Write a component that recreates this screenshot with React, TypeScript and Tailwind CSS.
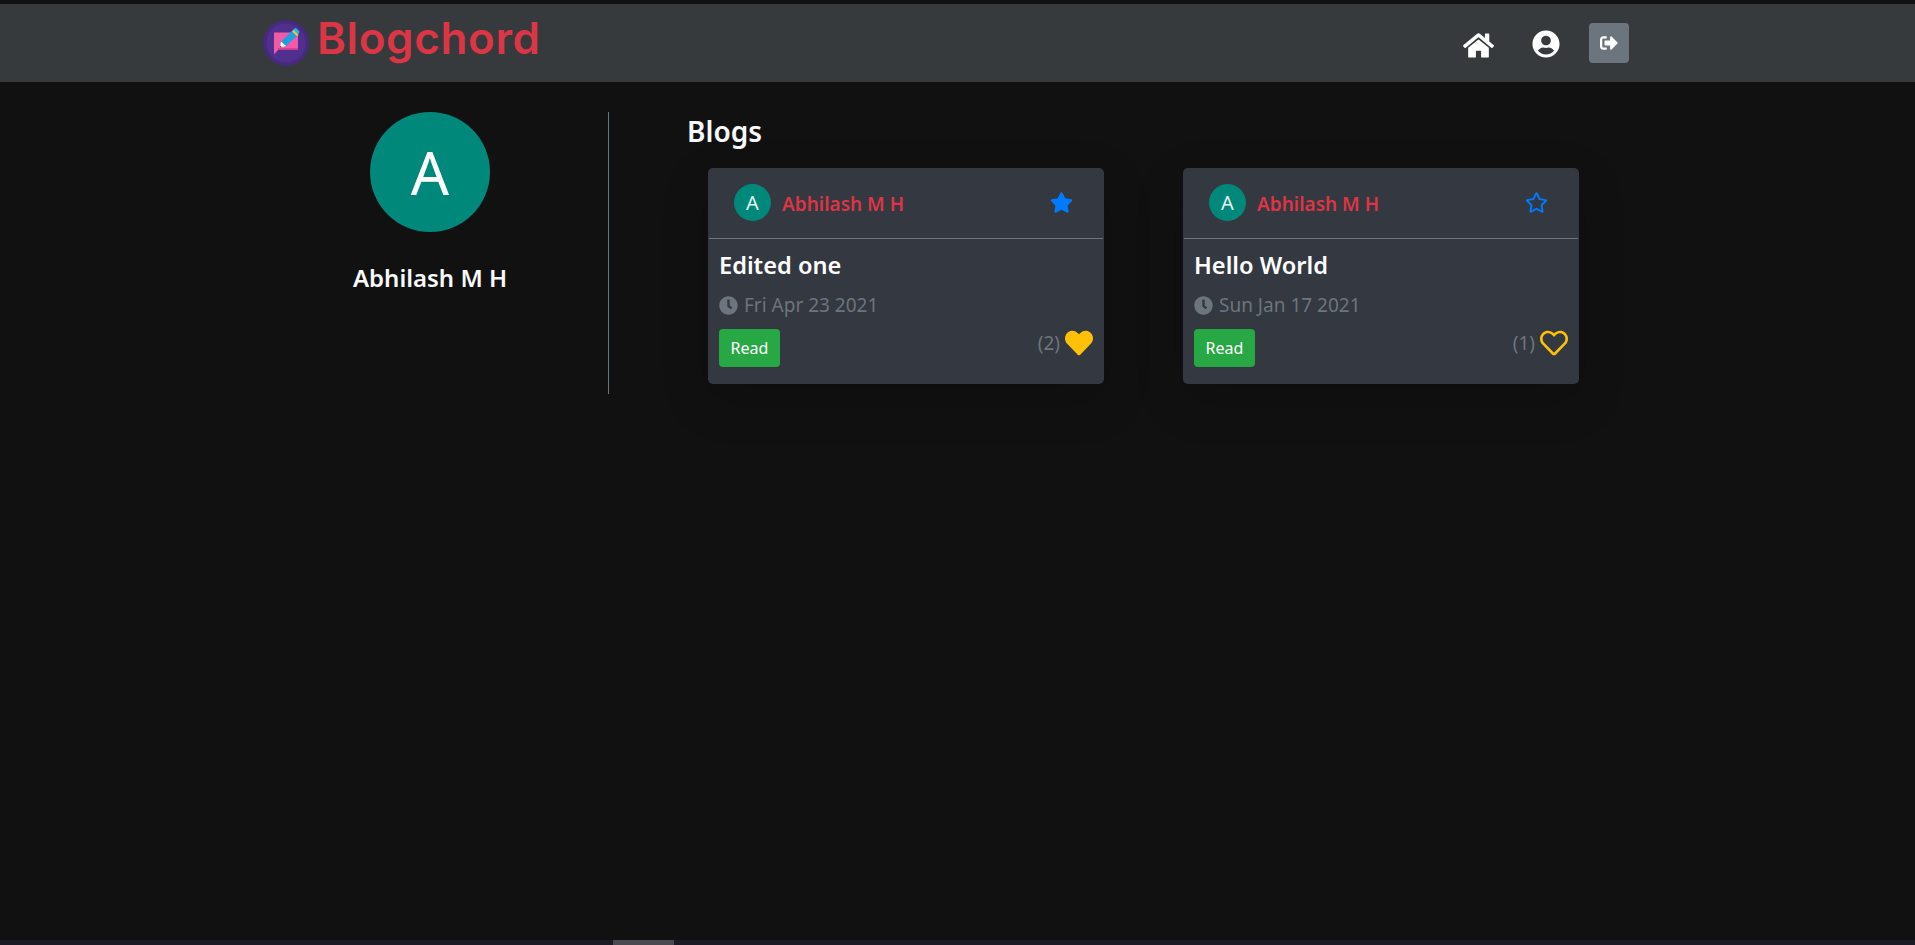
import { FaHome, FaUserCircle, FaSignOutAlt, FaStar, FaRegStar, FaHeart, FaRegHeart, FaClock } from "react-icons/fa";

function Logo() {
  return (
    <svg width="46" height="46" viewBox="0 0 46 46" className="shrink-0">
      <circle cx="23" cy="23" r="23" fill="#452a7d" />
      <circle cx="23" cy="23" r="19.5" fill="#512f8e" />
      <path d="M11 12.5H35V29.5H15.5L11 34.5Z" fill="#f25aa8" />
      <path d="M15 29.5H35V28H15Z" fill="#d9408f" />
      <path d="M18 21.5L30.5 9.5L35.5 14.5L23 26L17 27.5Z" fill="#1f9fe0" />
      <path d="M29.5 10.5L31.5 8.5Q32.5 7.7 33.5 8.5L36 11Q36.7 12 36 13L34.3 15Z" fill="#2cb4ee" />
      <path d="M29 11.5L30.5 10L35.5 14.8L34 16.2Z" fill="#f4c430" />
      <path d="M18 21.5L23 26L17 27.5Z" fill="#fff" />
      <path d="M17.3 25.8L18.8 27.1L16.8 27.7Z" fill="#7a2c2c" />
    </svg>
  );
}

function Avatar() {
  return (
    <div className="flex h-[37px] w-[37px] shrink-0 items-center justify-center rounded-full bg-[#00897b] text-[20px] leading-none text-[#e6f4f2]">
      A
    </div>
  );
}

function Card({ title, date, count, filled }: { title: string; date: string; count: string; filled: boolean }) {
  return (
    <div className="h-[216px] w-[396px] rounded-[5px] bg-[#343840] shadow-[0_16px_48px_rgba(0,0,0,0.175)]">
      <div className="mx-px flex h-[71px] items-center border-b border-[#6c757d] pb-px pl-[25px] pr-[30px]">
        <Avatar />
        <span className="ml-[11px] pt-[4px] text-[19px] font-semibold text-[#dc3545]">Abhilash M H</span>
        <span className="ml-auto text-[#007bff]">
          {filled ? <FaStar size={23} /> : <FaRegStar size={23} />}
        </span>
      </div>
      <div className="px-[11px] pt-[8px]">
        <div className="h-[36px] text-[23.6px] font-semibold leading-[36px] text-white">{title}</div>
        <div className="mt-[9px] flex h-[27px] items-center text-[19px] text-[#6c757d]">
          <FaClock size={19} />
          <span className="ml-[6px]">{date}</span>
        </div>
        <div className="mt-[10px] flex items-start justify-between">
          <button className="h-[38px] w-[61px] rounded-[4px] bg-[#28a745] text-[16px] text-white">Read</button>
          <div className="flex items-center text-[#6c757d]">
            <span className="text-[19px]">{count}</span>
            <span className="ml-[5px] text-[#ffc107]">
              {filled ? <FaHeart size={28} /> : <FaRegHeart size={28} />}
            </span>
          </div>
        </div>
      </div>
    </div>
  );
}

export default function App() {
  return (
    <div className="flex h-[945px] flex-col overflow-hidden bg-[#111111] pt-1 font-['Noto_Sans','Open_Sans',sans-serif]">
      <nav className="flex h-[78px] shrink-0 items-start bg-[#363a3d] pl-[263px] pr-[286px]">
        <div className="mt-[16px] flex items-start">
          <Logo />
          <span className="ml-[8px] mt-[-13px] font-['Inter',sans-serif] text-[44px] font-semibold leading-[62px] tracking-[0.6px] text-[#dc3545]">
            Blogchord
          </span>
        </div>
        <div className="ml-auto mt-[19px] flex items-center text-white">
          <FaHome size={31} className="mt-[4px]" />
          <FaUserCircle size={28} className="ml-[38px] mt-[2px]" />
          <button className="ml-[29px] flex h-[40px] w-[40px] items-center justify-center rounded-[4px] bg-[#6c757d]">
            <FaSignOutAlt size={18} />
          </button>
        </div>
      </nav>

      <main className="flex flex-1 items-start pl-[252px] pt-[30px]">
        <aside className="flex h-[282px] w-[357px] flex-col items-center border-r border-[#6c757d]">
          <div className="flex h-[120px] w-[120px] items-center justify-center rounded-full bg-[#00897b] text-[60px] leading-none text-white">
            A
          </div>
          <div className="mt-[29px] text-[24px] font-semibold leading-[34px] text-[#f8f9fa]">Abhilash M H</div>
        </aside>
        <section className="pl-[78px]">
          <h2 className="h-[56px] -translate-y-px text-[28px] font-semibold leading-[40px] text-[#f8f9fa]">Blogs</h2>
          <div className="flex gap-[79px] pl-[21px]">
            <Card title="Edited one" date="Fri Apr 23 2021" count="(2)" filled />
            <Card title="Hello World" date="Sun Jan 17 2021" count="(1)" filled={false} />
          </div>
        </section>
      </main>

      <div className="h-[5px] shrink-0 bg-[#1c1a24] pl-[613px]">
        <div className="h-full w-[61px] bg-[#4b4a50]" />
      </div>
    </div>
  );
}
